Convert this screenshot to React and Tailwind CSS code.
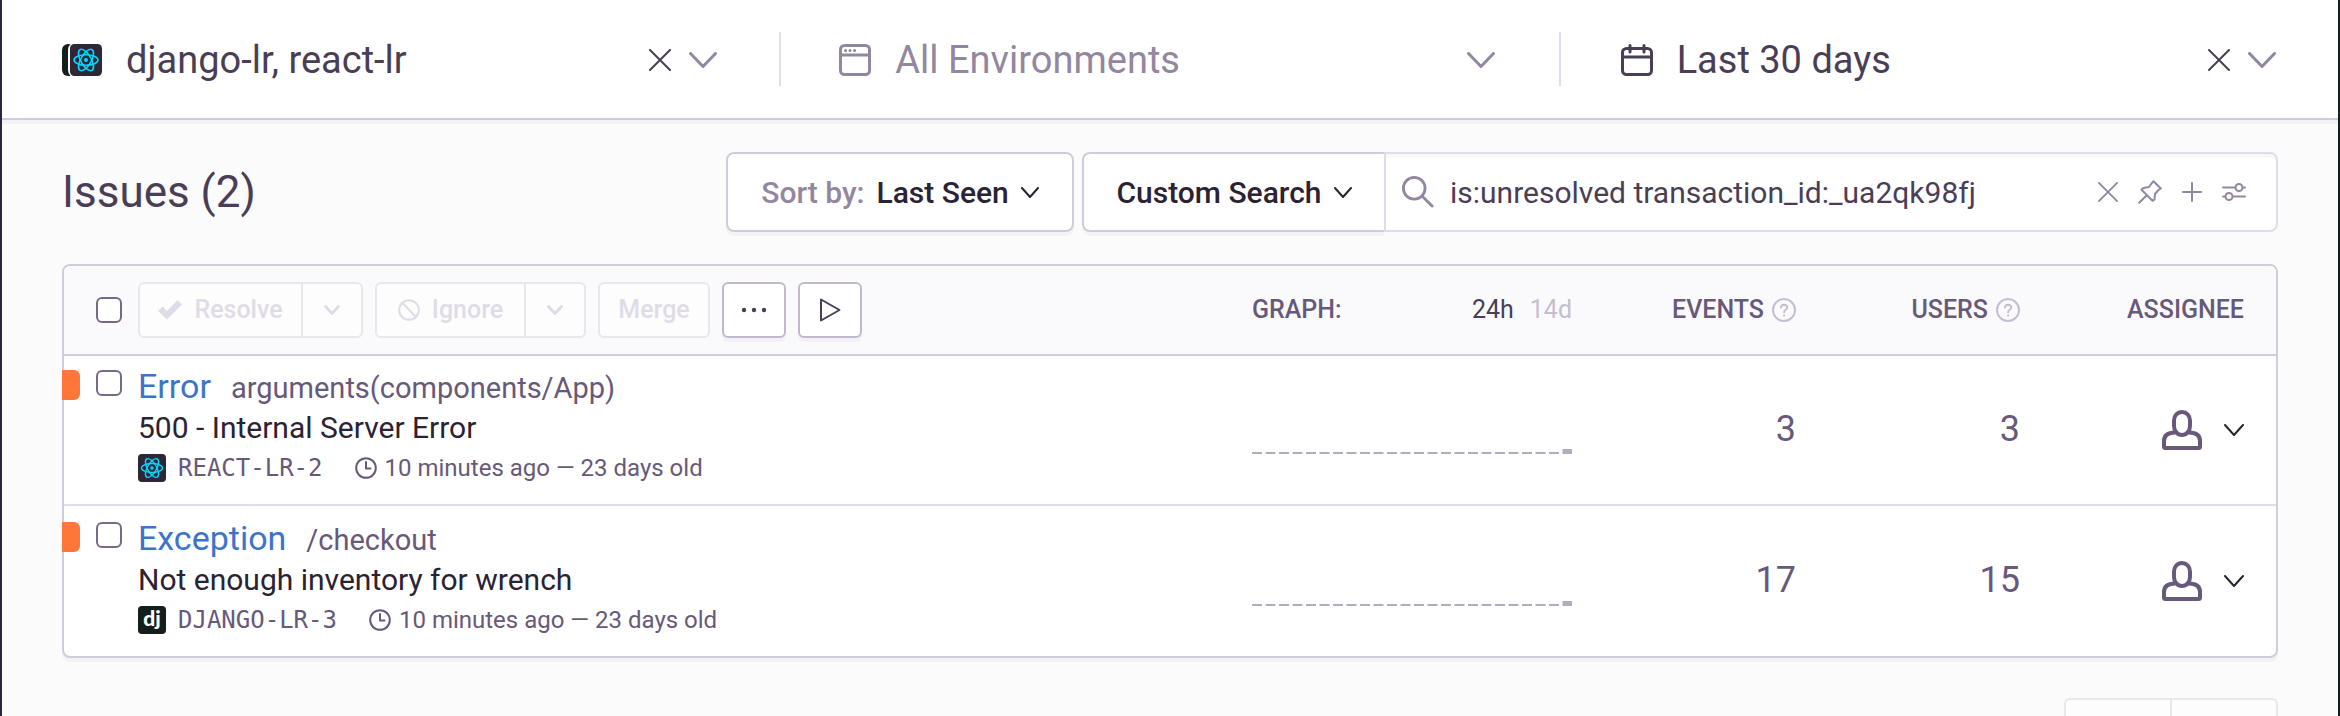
const S = ({ w, h, sw = 2, className = '', children, box }) => (
  <svg width={w} height={h} viewBox={box || `0 0 ${w} ${h}`} fill="none" stroke="currentColor" strokeWidth={sw} strokeLinecap="round" strokeLinejoin="round" aria-hidden="true" className={`shrink-0 ${className}`}>
    {children}
  </svg>
);

const Chevron = ({ w = 28, h = 16, sw = 3, className }) => (
  <S w={w} h={h} sw={sw} className={className}>
    <path d={`M${sw / 2} ${sw / 2}L${w / 2} ${h - sw / 2}L${w - sw / 2} ${sw / 2}`} />
  </S>
);

const Close = ({ size = 22, className }) => (
  <S w={size} h={size} box="0 0 22 22" className={className}>
    <path d="M1 1L21 21M21 1L1 21" />
  </S>
);

const ReactLogo = ({ size }) => (
  <svg width={size} height={size} viewBox="0 0 32 32" fill="none" stroke="#00d8ff" strokeWidth="1.6" aria-hidden="true" className="shrink-0">
    <rect width="32" height="32" rx="4.5" fill="#2f2636" stroke="none" />
    <ellipse cx="16" cy="16" rx="12" ry="5.2" />
    <ellipse cx="16" cy="16" rx="12" ry="5.2" transform="rotate(60 16 16)" />
    <ellipse cx="16" cy="16" rx="12" ry="5.2" transform="rotate(120 16 16)" />
    <circle cx="16" cy="16" r="2" fill="#00d8ff" stroke="none" />
  </svg>
);

const DjangoLogo = ({ size }) => (
  <svg width={size} height={size} viewBox="0 0 28 28" aria-hidden="true" className="shrink-0">
    <rect width="28" height="28" rx="4" fill="#131f1c" />
    <text x="14" y="20" textAnchor="middle" fill="#fff" fontSize="21" fontWeight="900" fontFamily="Lato, sans-serif">dj</text>
  </svg>
);

const WindowIcon = () => (
  <S w={32} h={32} sw={3} className="text-[#9386a0]">
    <rect x="1.5" y="1.5" width="29" height="29" rx="4" />
    <path d="M2 11H30" />
    <path d="M6.5 6.5h.1M11 6.5h.1M15.5 6.5h.1" />
  </S>
);

const CalendarIcon = () => (
  <S w={32} h={32} sw={3}>
    <rect x="1.5" y="4.5" width="29" height="26" rx="4" />
    <path d="M2 13H30M9 1.5V8M23 1.5V8" />
  </S>
);

const Help = () => (
  <S w={24} h={24} className="text-[#c6becf]">
    <circle cx="12" cy="12" r="11" />
    <path d="M9 9.5C9 5.8 15.2 5.8 15.2 9.5C15.2 11.8 12.1 11.8 12.1 14.2M12.1 17.3V17.4" />
  </S>
);

const Clock = () => (
  <S w={22} h={22}>
    <circle cx="11" cy="11" r="9.8" />
    <path d="M11 5V11.5H15.5" />
  </S>
);

const UserIcon = () => (
  <S w={40} h={40} sw={4} className="text-[#67597a]">
    <path d="M12 10.500a8 8.500 0 0 1 16 0V16a8 9 0 0 1-16 0Z" />
    <path d="M13 22.500C5.500 22.500 2 25.500 2 31V36.500Q2 38 3.500 38H36.500Q38 38 38 36.500V31C38 25.500 34.500 22.500 27 22.500" />
  </S>
);

function Filter({ icon, label, clear, muted }) {
  return (
    <div className={`flex min-w-0 flex-1 items-center pt-0.5 ${muted ? 'pl-[58px] pr-16' : 'pl-[60px] pr-[62px]'}`}>
      <button type="button" className={`flex min-w-0 flex-1 items-center gap-6 text-left text-[38px] leading-[48px] ${muted ? 'text-[#9386a0]' : 'text-[#4a3e56]'}`}>
        {icon}
        <span className="truncate">{label}</span>
      </button>
      <div className="flex items-center gap-[18px] text-[#4a3e56]">
        {clear && <button type="button" aria-label={`Clear ${label}`}><Close /></button>}
        <button type="button" aria-label={`Open ${label}`}><Chevron className="text-[#9386a0]" /></button>
      </div>
    </div>
  );
}

const faint = 'flex h-14 items-center justify-center border-2 border-[#e9e7ec] bg-[#fdfdfe] text-[25px] font-medium text-[#e0dce7]';
const solid = 'flex h-14 w-16 items-center justify-center rounded-md border-2 border-[#c2b9cf] bg-white text-[#4a3e56] shadow-[0_4px_0_rgba(43,34,51,0.04)]';
const box = 'block size-[26px] appearance-none rounded-md border-2 border-[#776a86] bg-white';

function Split({ icon, label, width }) {
  return (
    <div className="flex">
      <button type="button" disabled className={`${faint} ${width} gap-3 rounded-l-md`}>{icon}{label}</button>
      <button type="button" disabled aria-label={`${label} options`} className={`${faint} -ml-0.5 w-[62px] rounded-r-md`}>
        <Chevron w={16} h={10} />
      </button>
    </div>
  );
}

const issues = [
  { type: 'Error', culprit: 'arguments(components/App)', message: '500 - Internal Server Error', logo: <ReactLogo size={28} />, id: 'REACT-LR-2', events: 3, users: 3 },
  { type: 'Exception', culprit: '/checkout', message: 'Not enough inventory for wrench', logo: <DjangoLogo size={28} />, id: 'DJANGO-LR-3', events: 17, users: 15 },
];

function Graph() {
  return (
    <svg viewBox="0 0 320 48" className="block h-12 w-full" aria-hidden="true">
      {Array.from({ length: 24 }, (_, i) => (
        <rect key={i} x={i * 13.5} y={i === 23 ? 43 : 46} width="10" height={i === 23 ? 5 : 2} fill="#b5abc0" />
      ))}
    </svg>
  );
}

function IssueRow({ issue, last }) {
  const line = last ? '' : 'border-b-2 border-[#e0dce9]';
  return (
    <tr className="h-[150px]">
      <td className={`relative pl-8 align-top ${last ? 'pt-4' : 'pt-3.5'} ${line}`}>
        <span className={`absolute -left-0.5 h-[30px] w-[18px] rounded-r-md bg-[#ff7738] ${last ? 'top-4' : 'top-3.5'}`} />
        <input type="checkbox" aria-label={`Select ${issue.id}`} className={box} />
      </td>
      <td className={`align-top ${last ? 'pt-3' : 'pt-2.5'} ${line}`}>
        <div className="flex items-baseline gap-5 leading-10">
          <a href="#issue" className="text-[34px] text-[#3c74cc]">{issue.type}</a>
          <span className="text-[29px] text-[#67597a]">{issue.culprit}</span>
        </div>
        <div className="text-[30px] leading-10 text-[#2b2233]">{issue.message}</div>
        <div className="flex items-center text-[24px] leading-10 text-[#67597a]">
          {issue.logo}
          <span className="ml-3 font-['DejaVu_Sans_Mono',monospace]">{issue.id}</span>
          <span className="ml-8 flex items-center gap-2"><Clock />10 minutes ago — 23 days old</span>
        </div>
      </td>
      <td className={`align-top ${last ? 'pt-[52px]' : 'pt-[50px]'} ${line}`}><Graph /></td>
      <td className={`pb-0.5 text-right text-[36px] text-[#67597a] ${line}`}>{issue.events}</td>
      <td className={`pb-0.5 text-right text-[36px] text-[#67597a] ${line}`}>{issue.users}</td>
      <td className={`pr-8 ${line}`}>
        <button type="button" aria-label={`Assign ${issue.id}`} className="ml-auto flex items-center gap-[22px] text-[#2b2233]">
          <UserIcon />
          <Chevron w={20} h={12} sw={2} />
        </button>
      </td>
    </tr>
  );
}

export default function App() {
  return (
    <div className="flex h-screen flex-col overflow-hidden border-x-2 border-l-[#2f2440] border-r-[#131f1c] bg-[#fbfbfc] font-[Roboto,sans-serif] text-[#4a3e56]">
      <header className="flex h-[120px] shrink-0 items-center border-b-2 border-[#d2cbdc] bg-white shadow-[0_4px_0_rgba(43,34,51,0.04)]">
        <Filter
          clear
          label="django-lr, react-lr"
          icon={
            <span className="relative flex w-10 shrink-0 justify-end">
              <span className="absolute inset-y-0 left-0 w-8 rounded-md bg-[#131f1c]" />
              <span className="relative rounded-md ring-2 ring-white"><ReactLogo size={32} /></span>
            </span>
          }
        />
        <span className="h-[54px] w-0.5 bg-[#e0dce9]" />
        <Filter muted label="All Environments" icon={<WindowIcon />} />
        <span className="h-[54px] w-0.5 bg-[#e0dce9]" />
        <Filter clear label="Last 30 days" icon={<CalendarIcon />} />
      </header>

      <main className="flex flex-col px-[60px] pt-8">
        <div className="flex items-center">
          <h1 className="w-[664px] text-[44px] leading-[56px]">Issues (2)</h1>
          <button type="button" className="flex h-20 w-[348px] items-center justify-center gap-3 rounded-lg border-2 border-[#d2cbdc] bg-white text-[30px] font-medium text-[#2b2233] shadow-[0_4px_0_rgba(43,34,51,0.04)]">
            <span className="text-[#9386a0]">Sort by:</span>Last Seen<Chevron w={18} h={11} sw={2} />
          </button>
          <button type="button" className="ml-2 flex h-20 w-[302px] items-center justify-center gap-3 rounded-l-lg border-2 border-r-0 border-[#d2cbdc] bg-white text-[30px] font-medium text-[#2b2233] shadow-[0_4px_0_rgba(43,34,51,0.04)]">
            Custom Search<Chevron w={18} h={11} sw={2} />
          </button>
          <div className="flex h-20 min-w-0 flex-1 items-center rounded-r-lg border-2 border-[#e0dce9] bg-white pl-4 pr-[30px] text-[#9386a0] shadow-[inset_0_4px_0_rgba(43,34,51,0.03)]">
            <S w={32} h={32} box="0 0 34 34" sw={3}><circle cx="13" cy="13" r="11.5" /><path d="M21.5 21.5L32 32" /></S>
            <input type="text" aria-label="Search issues" defaultValue="is:unresolved transaction_id:_ua2qk98fj" className="ml-4 min-w-0 flex-1 bg-transparent text-[30px] text-[#4a3e56] outline-none" />
            <div className="flex items-center gap-5">
              <button type="button" aria-label="Clear search"><Close size={20} /></button>
              <button type="button" aria-label="Pin search">
                <S w={24} h={24}><path d="M15.5 1.2L22.800 8.500L20.500 10L17 14L16.500 19.500L14.500 20.800L3.500 9.800L5.500 8L11 7L13.500 3.500ZM9 15L1.200 22.800" /></S>
              </button>
              <button type="button" aria-label="Add to saved searches"><S w={20} h={20}><path d="M10 1V19M1 10H19" /></S></button>
              <button type="button" aria-label="Toggle filters">
                <S w={24} h={20}><path d="M1 5.500H13M21 5.500H23M1 14.500H3M11 14.500H23" /><circle cx="17" cy="5.5" r="3.5" /><circle cx="7" cy="14.5" r="3.5" /></S>
              </button>
            </div>
          </div>
        </div>

        <div className="mt-8 rounded-lg border-2 border-[#d2cbdc] bg-white shadow-[0_4px_0_rgba(43,34,51,0.04)]">
          <table className="w-full table-fixed border-separate border-spacing-0">
            <colgroup>
              <col className="w-[74px]" /><col /><col className="w-80" /><col className="w-56" /><col className="w-56" /><col className="w-64" />
            </colgroup>
            <thead className="text-[25px] text-[#67597a]">
              <tr className="h-[90px]">
                <th className="rounded-tl-md border-b-2 border-[#d2cbdc] bg-[#fafafc] pl-8">
                  <input type="checkbox" aria-label="Select all issues" className={box} />
                </th>
                <th className="border-b-2 border-[#d2cbdc] bg-[#fafafc]">
                  <div className="flex items-center gap-3">
                    <Split label="Resolve" width="w-[165px]" icon={<svg width="24" height="20" viewBox="0 0 24 20" fill="currentColor" aria-hidden="true"><path d="M0 11L4.500 6.500L9 11L19.500 0L24 4.500L9 19.500Z" /></svg>} />
                    <Split label="Ignore" width="w-[151px]" icon={<S w={22} h={22}><circle cx="11" cy="11" r="9.8" /><path d="M4.500 4L18 18" /></S>} />
                    <button type="button" disabled className={`${faint} w-28 rounded-md`}>Merge</button>
                    <button type="button" aria-label="More actions" className={solid}>
                      <svg width="26" height="6" viewBox="0 0 26 6" fill="currentColor" aria-hidden="true"><circle cx="3" cy="3" r="2.2" /><circle cx="13" cy="3" r="2.2" /><circle cx="23" cy="3" r="2.2" /></svg>
                    </button>
                    <button type="button" aria-label="Enable real-time updates" className={solid}>
                      <S w={22} h={24}><path d="M2 1.500V22.500L20.500 12Z" /></S>
                    </button>
                  </div>
                </th>
                <th className="border-b-2 border-[#d2cbdc] bg-[#fafafc]">
                  <div className="flex items-center justify-between">
                    <span className="font-medium">GRAPH:</span>
                    <span className="flex gap-4">
                      <button type="button" className="font-normal text-[#4a3e56]">24h</button>
                      <button type="button" className="font-normal text-[#c6becf]">14d</button>
                    </span>
                  </div>
                </th>
                <th className="border-b-2 border-[#d2cbdc] bg-[#fafafc] font-medium"><div className="flex items-center justify-end gap-2">EVENTS<Help /></div></th>
                <th className="border-b-2 border-[#d2cbdc] bg-[#fafafc] font-medium"><div className="flex items-center justify-end gap-2">USERS<Help /></div></th>
                <th className="rounded-tr-md border-b-2 border-[#d2cbdc] bg-[#fafafc] pr-8 text-right font-medium">ASSIGNEE</th>
              </tr>
            </thead>
            <tbody>
              {issues.map((issue, i) => <IssueRow key={issue.id} issue={issue} last={i === issues.length - 1} />)}
            </tbody>
          </table>
        </div>

        <nav aria-label="Pagination" className="mt-10 flex justify-end">
          <button type="button" disabled aria-label="Previous page" className="h-16 w-[108px] rounded-l-md border-2 border-[#e9e7ec] bg-[#fdfdfe]" />
          <button type="button" disabled aria-label="Next page" className="-ml-0.5 h-16 w-[108px] rounded-r-md border-2 border-[#e9e7ec] bg-[#fdfdfe]" />
        </nav>
      </main>
    </div>
  );
}
